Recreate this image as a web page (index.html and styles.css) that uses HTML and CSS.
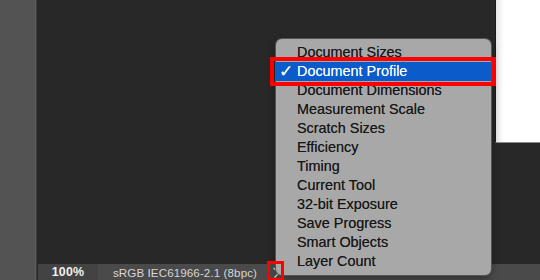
FILE: index.html
```html
<!DOCTYPE html>
<html lang="en">
<head>
  <meta charset="UTF-8" />
  <title>Status Bar Menu</title>
  <link rel="stylesheet" href="styles.css">
</head>
<body>
  <div class="app">
    <div class="toolbar-side"></div>
    <div class="workspace">
      <div class="canvas">
        <div class="document"></div>
      </div>
      <div class="status-bar">
        <div class="zoom-field">100%</div>
        <div class="info-field">sRGB IEC61966-2.1 (8bpc)</div>
        <button class="info-toggle" aria-label="Show info menu">
          <svg width="9" height="11" viewBox="0 0 9 11"><path d="M1.5 1 L7 6 L2.5 10.5" fill="none" stroke="#d8d8d8" stroke-width="1.4"/></svg>
        </button>
      </div>
    </div>
  </div>

  <ul class="info-menu" role="menu">
    <li>Document Sizes</li>
    <li class="checked">Document Profile</li>
    <li>Document Dimensions</li>
    <li>Measurement Scale</li>
    <li>Scratch Sizes</li>
    <li>Efficiency</li>
    <li>Timing</li>
    <li>Current Tool</li>
    <li>32-bit Exposure</li>
    <li>Save Progress</li>
    <li>Smart Objects</li>
    <li>Layer Count</li>
  </ul>

  <div class="callout callout-item"></div>
  <div class="callout callout-toggle"></div>
</body>
</html>
```

FILE: styles.css
```css
html, body {
  margin: 0;
  height: 100%;
  overflow: hidden;
  background: #282828;
  font-family: "Liberation Sans", Arial, sans-serif;
}

.app {
  display: flex;
  height: 280px;
}

.toolbar-side {
  width: 35px;
  background: #535353;
  border-right: 1px solid #5e5e5e;
  box-shadow: 1px 0 0 #3a3a3a;
}

.workspace {
  flex: 1;
  display: flex;
  flex-direction: column;
  margin-left: 2px;
}

.canvas {
  flex: 1;
  position: relative;
  background: #282828;
}

.document {
  position: absolute;
  left: 457px;
  top: 0;
  right: 0;
  height: 142px;
  background: linear-gradient(90deg, #e6e6e6 0, #fff 8px);
  border-left: 1px solid #1b1b1b;
  border-bottom: 1px solid #8a8a8a;
}

.status-bar {
  height: 16px;
  display: flex;
  align-items: center;
  background: #4a4a4a;
  font-size: 11.6px;
  color: #d6d6d6;
}

.zoom-field {
  width: 60px;
  height: 100%;
  display: flex;
  align-items: center;
  justify-content: center;
  background: #434343;
  color: #f0f0f0;
  font-weight: bold;
  font-size: 12.4px;
  letter-spacing: 0.2px;
}

.info-field {
  width: 170px;
  text-align: center;
  letter-spacing: 0.1px;
  padding-left: 2px;
}

.info-toggle {
  width: 12px;
  height: 16px;
  padding: 0;
  border: none;
  background: transparent;
  display: flex;
  align-items: center;
  justify-content: center;
}

.info-menu {
  position: absolute;
  left: 276px;
  top: 39px;
  width: 215px;
  height: 236px;
  box-sizing: border-box;
  margin: 0;
  padding: 4px 0 0;
  list-style: none;
  background: #a8a8a8;
  border-radius: 6px;
  box-shadow: 0 0 0 1px #555, 0 4px 10px rgba(0, 0, 0, 0.35);
  font-size: 14.4px;
  color: #161616;
  text-shadow: 0 0 0.4px rgba(0, 0, 0, 0.6);
}

.info-menu li {
  height: 19px;
  line-height: 19px;
  padding-left: 21px;
  position: relative;
}

.info-menu li.checked {
  background: #0b5ccb;
  color: #fff;
  text-shadow: 0 0 0.4px rgba(255, 255, 255, 0.6);
}

.info-menu li.checked::before {
  content: "\2713";
  position: absolute;
  left: 3px;
  top: 0;
  font-family: "DejaVu Sans", sans-serif;
  font-weight: bold;
  font-size: 17px;
}

.callout {
  position: absolute;
  border: 4px solid #f00;
  box-sizing: border-box;
}

.callout-item {
  left: 270px;
  top: 57px;
  width: 226px;
  height: 29px;
}

.callout-toggle {
  left: 267px;
  top: 261px;
  width: 17px;
  height: 20px;
  border-width: 3px;
}
```
